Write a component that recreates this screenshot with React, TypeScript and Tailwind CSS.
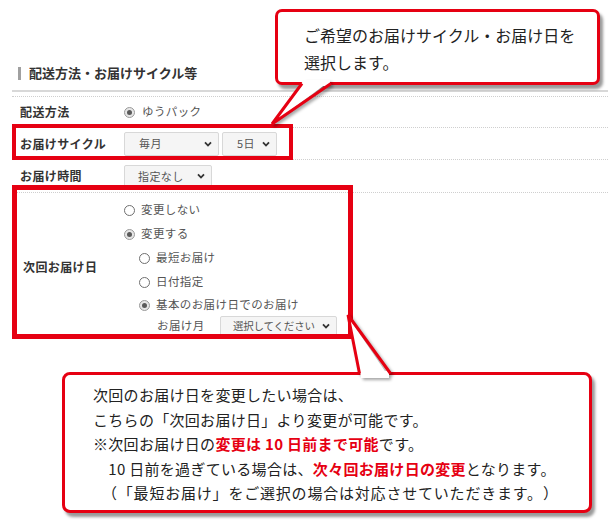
import React from 'react'

const font = "font-['Noto_Sans_CJK_JP','Noto_Sans',sans-serif]"

function Radio({ checked }: { checked?: boolean }) {
  return (
    <span
      className={
        checked
          ? 'flex h-[11px] w-[11px] shrink-0 items-center justify-center rounded-full border border-[#9a9a9a] bg-[#e6e6e6]'
          : 'flex h-[11px] w-[11px] shrink-0 items-center justify-center rounded-full border border-[#6f6f6f] bg-white'
      }
    >
      {checked && <span className="h-[5px] w-[5px] rounded-full bg-[#5a5a5a]" />}
    </span>
  )
}

function Chevron() {
  return (
    <svg width="8" height="6" viewBox="0 0 8 6" className="shrink-0">
      <path d="M1 1.3 L4 4.5 L7 1.3" fill="none" stroke="#333" strokeWidth="1.8" />
    </svg>
  )
}

function Select({ label, className }: { label: string; className: string }) {
  return (
    <div
      className={`flex items-center justify-between whitespace-nowrap rounded-[2px] border border-[#d8d8d8] bg-[#f5f5f5] pr-[6px] text-[#555] ${className}`}
    >
      <span>{label}</span>
      <Chevron />
    </div>
  )
}

function Option({ checked, nested, label, last }: { checked?: boolean; nested?: boolean; label: string; last?: boolean }) {
  return (
    <div className={`flex items-center gap-[6px] ${last ? 'h-[22px]' : 'h-[24px]'} ${nested ? 'pl-[15px]' : ''}`}>
      <Radio checked={checked} />
      <span>{label}</span>
    </div>
  )
}

const row = 'flex items-center border-b border-dotted border-[#cfcfcf]'
const label = 'w-[112px] shrink-0 pl-[8px] text-[12px] font-bold text-[#333]'

export default function App() {
  return (
    <div className={`relative h-[523px] w-[608px] overflow-hidden bg-white text-[#333] [text-spacing-trim:space-all] ${font}`}>
      {/* 見出し */}
      <div className="ml-[12px] mt-[66px] border-b-2 border-[#d8d8d8] pb-[10px]">
        <div className="flex h-[14px] items-center pl-[6px]">
          <span className="h-[13px] w-[3px] bg-[#a0a0a0]" />
          <span className="ml-[8px] text-[13px] font-bold leading-[14px]">配送方法・お届けサイクル等</span>
        </div>
      </div>

      {/* フォーム */}
      <div className="ml-[12px] mt-[4px] border-t border-dotted border-[#cfcfcf] text-[11.5px] tracking-[0.4px] text-[#555]">
        <div className={`${row} h-[31px]`}>
          <div className={label}>配送方法</div>
          <div className="flex items-center gap-[7px]">
            <Radio checked />
            <span>ゆうパック</span>
          </div>
        </div>
        <div className={`${row} h-[32px]`}>
          <div className={label}>お届けサイクル</div>
          <div className="flex gap-[3px] text-[11px]">
            <Select label="毎月" className="h-[24px] w-[95px] pl-[14px]" />
            <Select label="5日" className="h-[24px] w-[55px] pl-[14px]" />
          </div>
        </div>
        <div className={`${row} h-[33px]`}>
          <div className={label}>お届け時間</div>
          <Select label="指定なし" className="h-[23px] w-[88px] pl-[13px] text-[11px]" />
        </div>
        <div className="flex items-center pb-[4px] pt-[5px]">
          <div className="w-[112px] shrink-0 pl-[11px] text-[12px] font-bold text-[#333]">次回お届け日</div>
          <div className="flex flex-col">
            <Option label="変更しない" />
            <Option checked label="変更する" />
            <Option nested label="最短お届け" />
            <Option nested label="日付指定" />
            <Option nested checked last label="基本のお届け日でのお届け" />
            <div className="flex h-[20px] items-center pl-[33px]">
              <span className="w-[63px]">お届け月</span>
              <Select label="選択してください" className="h-[20px] w-[117px] pl-[12px] text-[10.5px] tracking-[-0.2px]" />
            </div>
          </div>
        </div>
      </div>

      {/* 赤枠 */}
      <div className="pointer-events-none absolute left-[12px] top-[124px] h-[36px] w-[281px] border-[4px] border-[#e60012]" />
      <div className="pointer-events-none absolute left-[12px] top-[185px] h-[154px] w-[341px] border-[5px] border-[#e60012]" />

      {/* 吹き出し（上） */}
      <div className="absolute left-[275px] top-[9px] h-[76px] w-[325px] rounded-[7px] border-[3px] border-[#e60012] bg-white pl-[26px] pt-[10px] text-[16px] leading-[27px] text-[#222] shadow-[3px_4px_3px_rgba(0,0,0,0.4)]">
        <p>ご希望のお届けサイクル・お届け日を</p>
        <p>選択します。</p>
      </div>

      {/* 吹き出し（下） */}
      <div className="absolute left-[62px] top-[372px] h-[141px] w-[530px] rounded-[8px] border-[3px] border-[#e60012] bg-white pl-[28px] pt-[8px] text-[15px] leading-[24.5px] tracking-[0.3px] text-[#222] shadow-[3px_4px_3px_rgba(0,0,0,0.4)]">
        <p>次回のお届け日を変更したい場合は、</p>
        <p>こちらの「次回お届け日」より変更が可能です。</p>
        <p>
          ※次回お届け日の<span className="font-bold text-[#e60012]">変更は 10 日前まで可能</span>です。
        </p>
        <p>
          {'\u3000'}10 日前を過ぎている場合は、<span className="font-bold text-[#e60012]">次々回お届け日の変更</span>となります。
        </p>
        <p className="pl-[9px] tracking-[0.8px]">（「最短お届け」をご選択の場合は対応させていただきます。）</p>
      </div>

      {/* 吹き出しのしっぽ */}
      <svg
        className="pointer-events-none absolute left-0 top-0 drop-shadow-[2px_2px_1.5px_rgba(0,0,0,0.35)]"
        width="608"
        height="523"
        viewBox="0 0 608 523"
      >
        <rect x="304" y="80" width="26" height="6" fill="#fff" />
        <polygon points="303,81 330,81 273,123" fill="#fff" />
        <polyline points="302,83.5 272,124 331,83.5" fill="none" stroke="#e60012" strokeWidth="3" strokeLinejoin="miter" />
        <rect x="361" y="371" width="28" height="7" fill="#fff" />
        <polygon points="361,377 389,377 349,318" fill="#fff" />
        <polyline points="359.5,373.5 348,315 390.5,373.5" fill="none" stroke="#e60012" strokeWidth="3" strokeLinejoin="miter" />
      </svg>
    </div>
  )
}
